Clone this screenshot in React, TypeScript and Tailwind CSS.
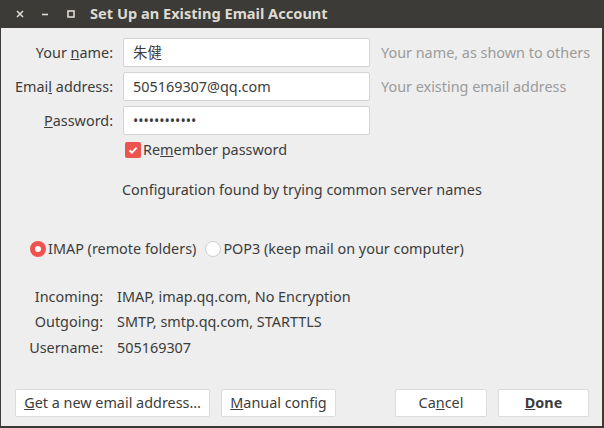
import React from "react";

const font = { fontFamily: '"Noto Sans", "Noto Sans CJK SC", sans-serif' };

const Hint = ({ children }: { children: React.ReactNode }) => (
  <span className="text-[#9b9b9b]">{children}</span>
);

const App = () => {
  return (
    <div
      className="w-[604px] h-[428px] flex flex-col bg-[#3c3b37] text-[14.4px] text-[#3c3c3c]"
      style={font}
    >
      {/* title bar */}
      <div className="h-[28px] flex items-center shrink-0">
        <div className="w-[90px] flex items-center pl-[16px] gap-[16px]">
          <svg width="8" height="8" viewBox="0 0 8 8">
            <path d="M1 1L7 7M7 1L1 7" stroke="#dfdbd2" strokeWidth="1.6" />
          </svg>
          <svg width="8" height="8" viewBox="0 0 8 8" className="ml-[1px]">
            <path d="M1 4.5H7" stroke="#dfdbd2" strokeWidth="1.6" />
          </svg>
          <svg width="8" height="8" viewBox="0 0 8 8" className="ml-[2px]">
            <rect x="1" y="1" width="6" height="6" fill="none" stroke="#dfdbd2" strokeWidth="1.6" />
          </svg>
        </div>
        <span className="font-bold text-[#dfdbd2] text-[14.6px]">
          Set Up an Existing Email Account
        </span>
      </div>

      {/* dialog body */}
      <div className="flex-1 ml-[1px] mr-[2px] mb-[2px] bg-[#eeeeee] flex flex-col">
        <div className="grid grid-cols-[112px_247px_auto] gap-x-[10px] gap-y-[5px] mt-[10px] items-center">
          <label className="text-right">
            Your <u>n</u>ame:
          </label>
          <div className="h-[29px] bg-white border border-[#d3d3d3] rounded-[2px] flex items-center px-[9px]">
            朱健
          </div>
          <span className="pl-[1px]">
            <Hint>Your name, as shown to others</Hint>
          </span>

          <label className="text-right">
            Emai<u>l</u> address:
          </label>
          <div className="h-[29px] bg-white border border-[#d3d3d3] rounded-[2px] flex items-center px-[9px]">
            505169307@qq.com
          </div>
          <span className="pl-[1px]">
            <Hint>Your existing email address</Hint>
          </span>

          <label className="text-right">
            <u>P</u>assword:
          </label>
          <div className="h-[29px] bg-white border border-[#d3d3d3] rounded-[2px] flex items-center px-[9px] text-[14px]">
            ••••••••••••
          </div>
          <span />
        </div>

        <div className="flex items-center mt-[6px] ml-[124px] h-[18px]">
          <span className="w-[16px] h-[16px] rounded-[2px] bg-[#ef5350] flex items-center justify-center">
            <svg width="12" height="12" viewBox="0 0 12 12">
              <path d="M2.5 6.2L5 8.6L9.6 3.6" fill="none" stroke="white" strokeWidth="2" />
            </svg>
          </span>
          <span className="ml-[2px]">
            Re<u>m</u>ember password
          </span>
        </div>

        <div className="mt-[20px] ml-[121px]">
          Configuration found by trying common server names
        </div>

        <div className="flex items-center mt-[39px] ml-[29px] h-[18px]">
          <span className="w-[16px] h-[16px] rounded-full bg-[#ef5350] flex items-center justify-center">
            <span className="w-[6px] h-[6px] rounded-full bg-white" />
          </span>
          <span className="ml-[2px]">IMAP (remote folders)</span>
          <span className="ml-[9px] w-[16px] h-[16px] rounded-full bg-white border border-[#cfcfcf]" />
          <span className="ml-[2px]">POP3 (keep mail on your computer)</span>
        </div>

        <div className="grid grid-cols-[102px_auto] gap-x-[14px] gap-y-[4px] mt-[28px]">
          <span className="text-right">Incoming:</span>
          <span>IMAP, imap.qq.com, No Encryption</span>
          <span className="text-right">Outgoing:</span>
          <span>SMTP, smtp.qq.com, STARTTLS</span>
          <span className="text-right">Username:</span>
          <span>505169307</span>
        </div>

        <div className="flex items-center mt-auto mb-[9px] pl-[14px] pr-[13px]">
          <button className="h-[28px] w-[195px] bg-white border border-[#dcdcdc] rounded-[2px]">
            <u>G</u>et a new email address…
          </button>
          <button className="h-[28px] w-[115px] ml-[11px] bg-white border border-[#dcdcdc] rounded-[2px]">
            <u>M</u>anual config
          </button>
          <button className="h-[28px] w-[92px] ml-auto bg-white border border-[#dcdcdc] rounded-[2px]">
            Ca<u>n</u>cel
          </button>
          <button className="h-[28px] w-[91px] ml-[11px] bg-white border border-[#dcdcdc] rounded-[2px] font-bold">
            <u>D</u>one
          </button>
        </div>
      </div>
    </div>
  );
};

export default App;
